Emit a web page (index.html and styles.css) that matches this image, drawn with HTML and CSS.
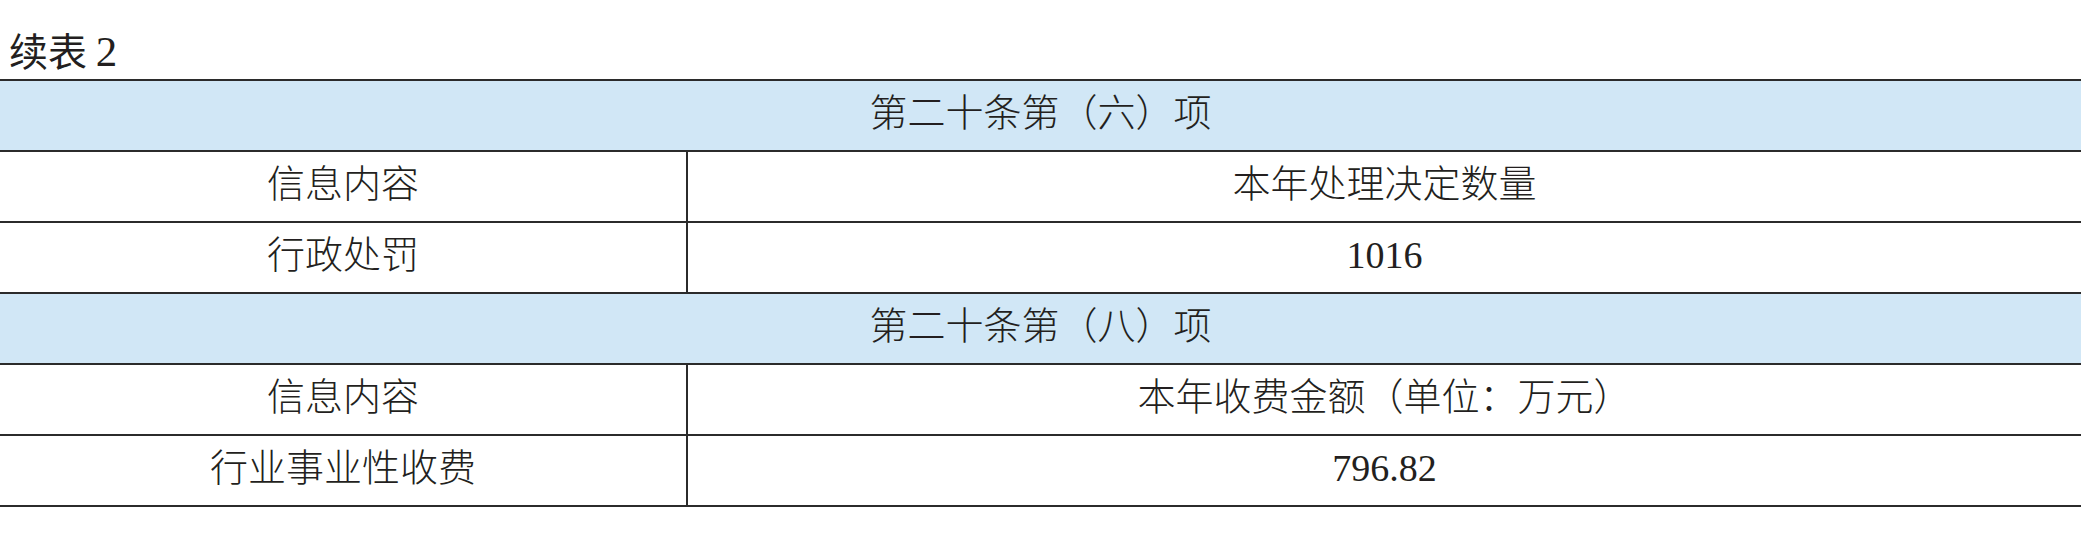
FILE: index.html
```html
<!DOCTYPE html>
<html lang="zh-CN">
<head>
<meta charset="utf-8">
<title>续表 2</title>
<link rel="stylesheet" href="styles.css">
</head>
<body>
<div class="page">
  <div class="caption">续表 <span class="num">2</span></div>
  <div class="table">
    <div class="row section"><div class="cell">第二十条第（六）项</div></div>
    <div class="row"><div class="cell">信息内容</div><div class="cell divided">本年处理决定数量</div></div>
    <div class="row"><div class="cell">行政处罚</div><div class="cell divided">1016</div></div>
    <div class="row section"><div class="cell">第二十条第（八）项</div></div>
    <div class="row"><div class="cell">信息内容</div><div class="cell divided">本年收费金额（单位：万元）</div></div>
    <div class="row"><div class="cell">行业事业性收费</div><div class="cell divided">796.82</div></div>
  </div>
</div>
</body>
</html>
```

FILE: styles.css
```css
html, body {
  margin: 0;
  padding: 0;
  background: #ffffff;
}

.page {
  width: 2081px;
  color: #231f20;
}

.caption {
  height: 79px;
  box-sizing: border-box;
  padding: 26px 0 0 9px;
  font-family: "Noto Sans CJK SC", sans-serif;
  font-weight: 400;
  font-size: 39px;
  line-height: 46px;
}

.caption .num {
  font-family: "Liberation Serif", serif;
  font-weight: 400;
  font-size: 43px;
}

.table {
  border-top: 2px solid #2b2b2b;
  font-family: "Liberation Serif", "Noto Sans CJK SC", serif;
  font-weight: 300;
  font-size: 38px;
}

.row {
  display: grid;
  grid-template-columns: 686px 1fr;
  height: 69px;
  border-bottom: 2px solid #2b2b2b;
}

.row.section {
  grid-template-columns: 1fr;
  background: #d1e7f6;
}

.cell {
  display: flex;
  align-items: center;
  justify-content: center;
  line-height: 1;
  padding-bottom: 5px;
}

.cell.divided {
  border-left: 2px solid #2b2b2b;
}
```
